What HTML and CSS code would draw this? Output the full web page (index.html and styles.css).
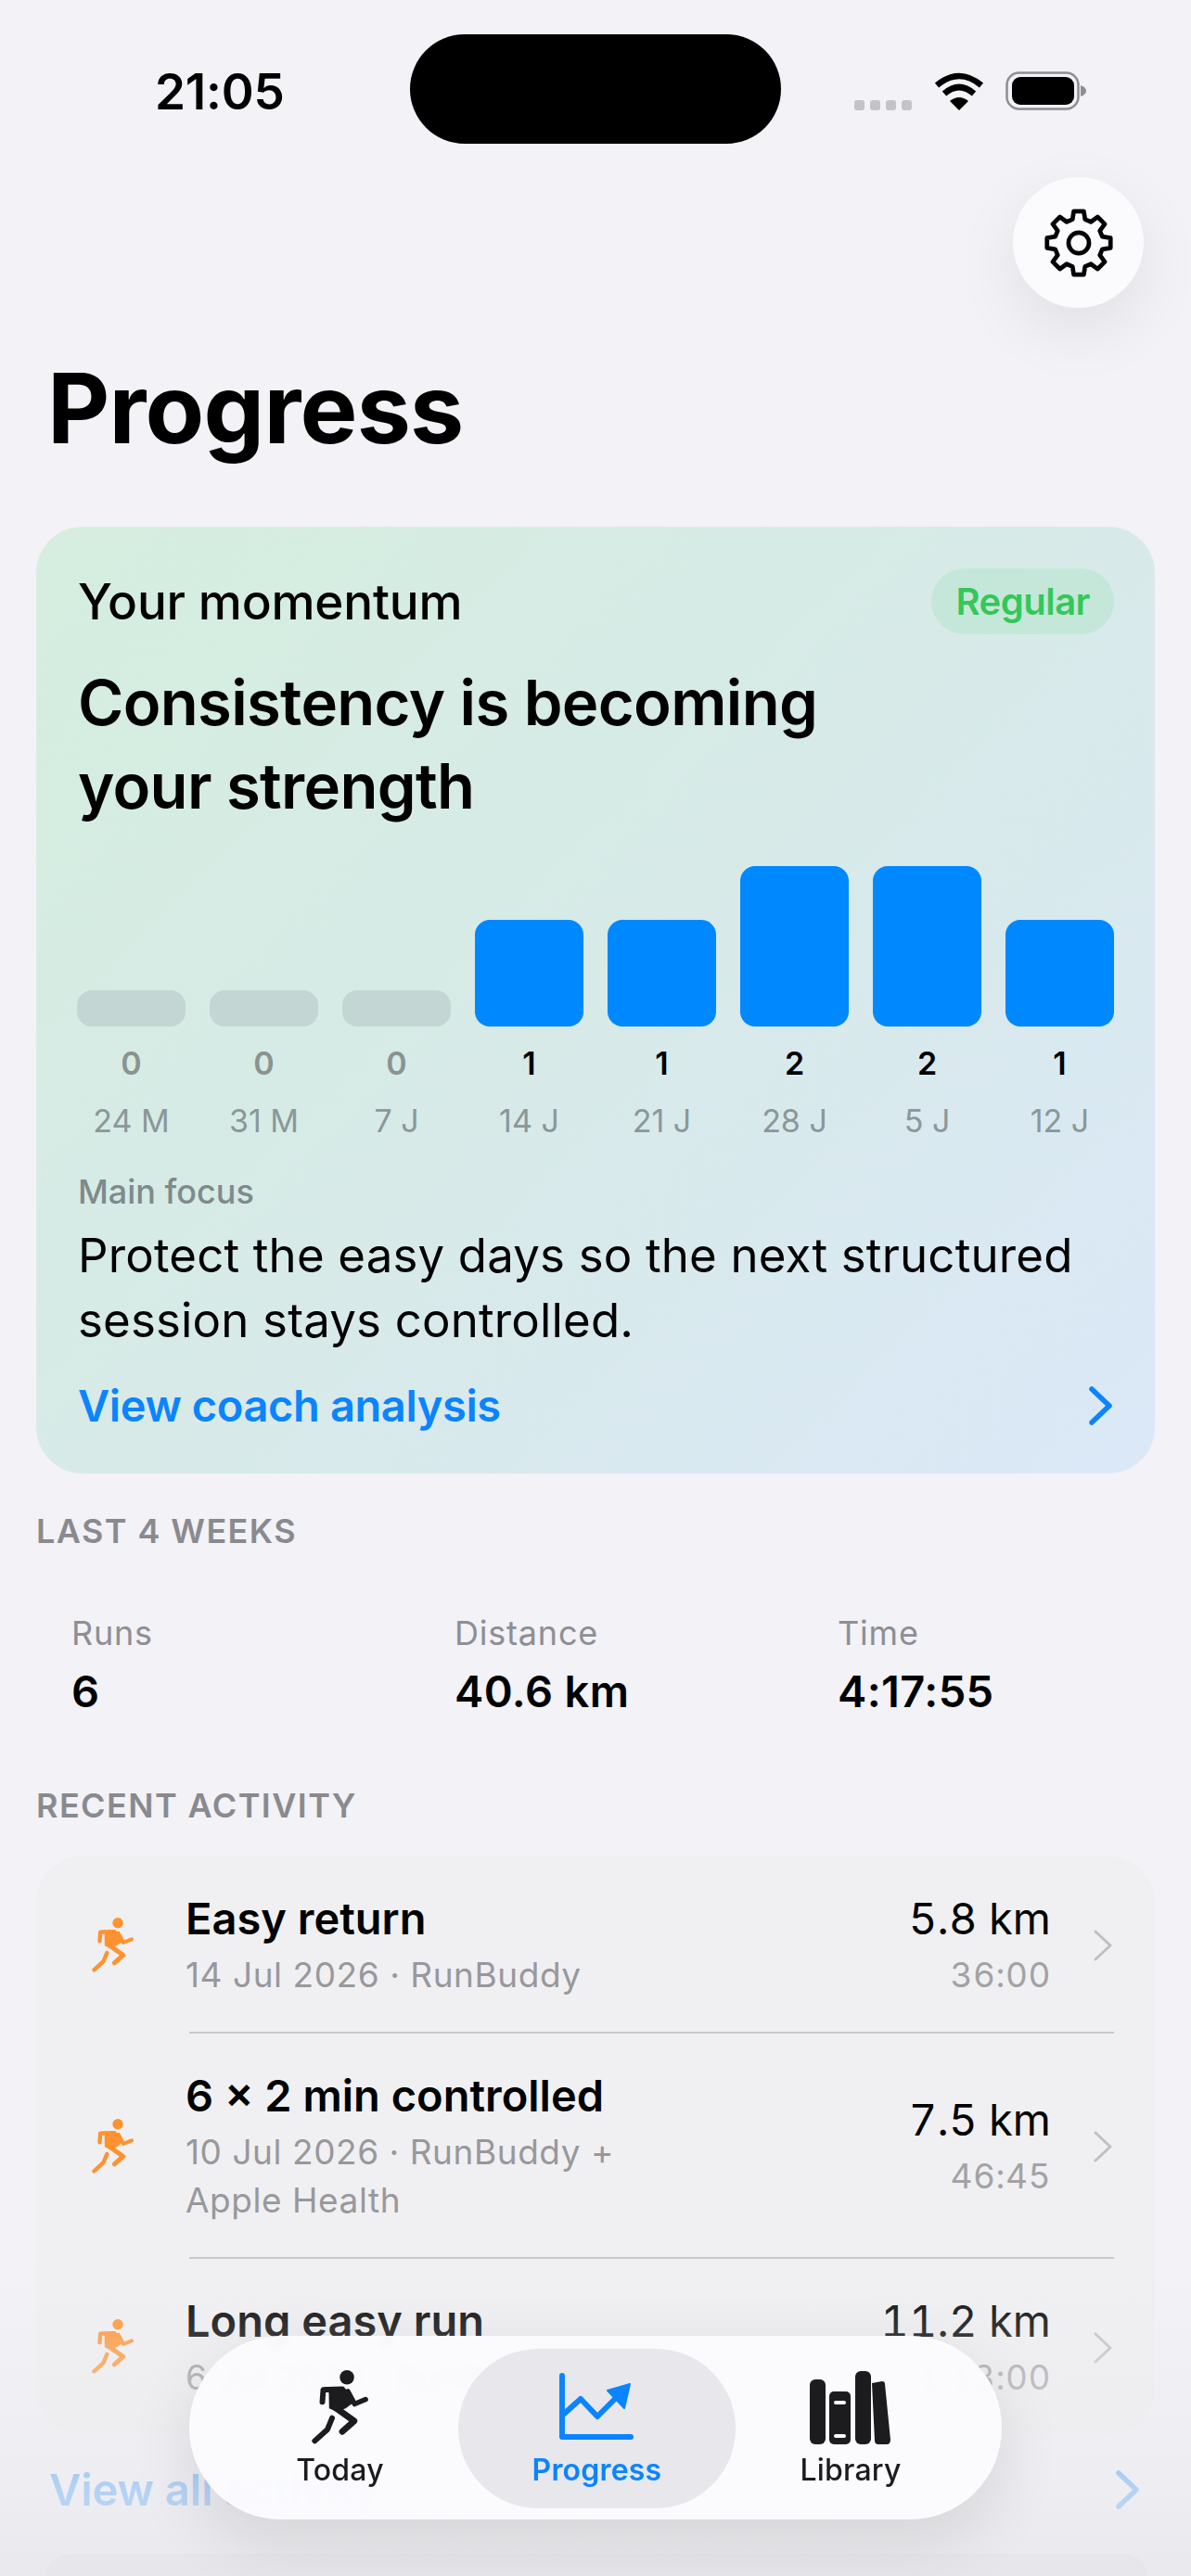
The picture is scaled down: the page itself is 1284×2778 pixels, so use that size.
FILE: index.html
```html
<!DOCTYPE html>
<html lang="en">
<head>
  <meta charset="UTF-8" />
  <title>Progress</title>
  <link rel="stylesheet" href="styles.css">
</head>
<body>
  <svg class="defs" width="0" height="0" aria-hidden="true">
    <symbol id="runner" viewBox="0 0 133 175">
      <circle cx="83" cy="17" r="17" fill="currentColor"/>
      <path d="M25 75 L27 48 Q27 46 30 46 L72 45" fill="none" stroke="currentColor" stroke-width="13" stroke-linecap="round" stroke-linejoin="round"/>
      <path d="M85 50 L101 80 L127 69" fill="none" stroke="currentColor" stroke-width="12" stroke-linecap="round" stroke-linejoin="round"/>
      <path d="M40 44 H80 L96 78 L80 90 L58 98 L41 90 Z" fill="currentColor"/>
      <path d="M58 90 L100 120 L72 145" fill="none" stroke="currentColor" stroke-width="15" stroke-linecap="round" stroke-linejoin="round"/>
      <path d="M48 113 L37 140 L7 167" fill="none" stroke="currentColor" stroke-width="13" stroke-linecap="round" stroke-linejoin="round"/>
    </symbol>
    <symbol id="chevron" viewBox="0 0 20 34">
      <path d="M2 2 L18 17 L2 32" fill="none" stroke="currentColor" stroke-width="3" stroke-linecap="round" stroke-linejoin="round"/>
    </symbol>
    <symbol id="chevron-bold" viewBox="0 0 28 42">
      <path d="M4 3 L23 21 L4 39" fill="none" stroke="currentColor" stroke-width="5.5" stroke-linecap="round" stroke-linejoin="round"/>
    </symbol>
  </svg>

  <div class="status">
    <span class="clock">21:05</span>
    <div class="island"></div>
    <div class="status-icons">
      <div class="signal"><i></i><i></i><i></i><i></i></div>
      <svg class="wifi" width="54" height="41" viewBox="0 0 54 41">
        <path d="M3 14 Q27 -6 51 14" fill="none" stroke="#000" stroke-width="6.5"/>
        <path d="M11 23 Q27 9 43 23" fill="none" stroke="#000" stroke-width="6.5"/>
        <path d="M27 41 L17 31 Q27 23 37 31 Z" fill="#000"/>
      </svg>
      <svg class="battery" width="88" height="42" viewBox="0 0 88 42">
        <rect x="1.5" y="1.5" width="77" height="39" rx="13" fill="none" stroke="#8e8e93" stroke-width="2.5"/>
        <rect x="7" y="6" width="67" height="30" rx="9" fill="#000"/>
        <path d="M81 15 Q87 17 87 21 Q87 25 81 27 Z" fill="#8e8e93"/>
      </svg>
    </div>
  </div>

  <button class="settings-btn" aria-label="Settings">
    <svg width="84" height="84" viewBox="-40 -40 80 80">
      <polygon points="32.59,-5.16 32.59,5.16 24.15,6.47 21.65,12.5 26.7,19.4 19.4,26.7 12.5,21.65 6.47,24.15 5.16,32.59 -5.16,32.59 -6.47,24.15 -12.5,21.65 -19.4,26.7 -26.7,19.4 -21.65,12.5 -24.15,6.47 -32.59,5.16 -32.59,-5.16 -24.15,-6.47 -21.65,-12.5 -26.7,-19.4 -19.4,-26.7 -12.5,-21.65 -6.47,-24.15 -5.16,-32.59 5.16,-32.59 6.47,-24.15 12.5,-21.65 19.4,-26.7 26.7,-19.4 21.65,-12.5 24.15,-6.47" fill="none" stroke="#000" stroke-width="4.5" stroke-linejoin="round"/>
      <circle r="10.5" fill="none" stroke="#000" stroke-width="4.5"/>
    </svg>
  </button>

  <h1 class="page-title">Progress</h1>

  <section class="momentum">
    <div class="momentum-top">
      <span class="momentum-label">Your momentum</span>
      <span class="badge">Regular</span>
    </div>
    <h2 class="momentum-title">Consistency is becoming<br>your strength</h2>

    <div class="chart">
      <div class="col empty"><div class="bar-slot"><div class="bar" style="height: 39px"></div></div><span class="count">0</span><span class="week">24 M</span></div>
      <div class="col empty"><div class="bar-slot"><div class="bar" style="height: 39px"></div></div><span class="count">0</span><span class="week">31 M</span></div>
      <div class="col empty"><div class="bar-slot"><div class="bar" style="height: 39px"></div></div><span class="count">0</span><span class="week">7 J</span></div>
      <div class="col"><div class="bar-slot"><div class="bar" style="height: 115px"></div></div><span class="count">1</span><span class="week">14 J</span></div>
      <div class="col"><div class="bar-slot"><div class="bar" style="height: 115px"></div></div><span class="count">1</span><span class="week">21 J</span></div>
      <div class="col"><div class="bar-slot"><div class="bar" style="height: 173px"></div></div><span class="count">2</span><span class="week">28 J</span></div>
      <div class="col"><div class="bar-slot"><div class="bar" style="height: 173px"></div></div><span class="count">2</span><span class="week">5 J</span></div>
      <div class="col"><div class="bar-slot"><div class="bar" style="height: 115px"></div></div><span class="count">1</span><span class="week">12 J</span></div>
    </div>

    <div class="focus-label">Main focus</div>
    <p class="focus-text">Protect the easy days so the next structured<br>session stays controlled.</p>
    <a class="coach-link" href="#">
      <span>View coach analysis</span>
      <svg width="28" height="42"><use href="#chevron-bold"/></svg>
    </a>
  </section>

  <h3 class="section-title first">LAST 4 WEEKS</h3>
  <div class="stats">
    <div><div class="stat-label">Runs</div><div class="stat-value">6</div></div>
    <div><div class="stat-label">Distance</div><div class="stat-value">40.6 km</div></div>
    <div><div class="stat-label">Time</div><div class="stat-value">4:17:55</div></div>
  </div>

  <h3 class="section-title">RECENT ACTIVITY</h3>
  <div class="activity-list">
    <div class="activity">
      <svg class="run-icon" width="45" height="59"><use href="#runner"/></svg>
      <div class="activity-body">
        <div class="activity-main">
          <div class="activity-title">Easy return</div>
          <div class="activity-sub">14 Jul 2026 · RunBuddy</div>
        </div>
        <div class="activity-nums">
          <div class="activity-dist">5.8 km</div>
          <div class="activity-time">36:00</div>
        </div>
        <svg class="row-chevron" width="20" height="34"><use href="#chevron"/></svg>
      </div>
    </div>
    <div class="activity">
      <svg class="run-icon" width="45" height="59"><use href="#runner"/></svg>
      <div class="activity-body">
        <div class="activity-main">
          <div class="activity-title">6 × 2 min controlled</div>
          <div class="activity-sub">10 Jul 2026 · RunBuddy +<br>Apple Health</div>
        </div>
        <div class="activity-nums">
          <div class="activity-dist">7.5 km</div>
          <div class="activity-time">46:45</div>
        </div>
        <svg class="row-chevron" width="20" height="34"><use href="#chevron"/></svg>
      </div>
    </div>
    <div class="activity">
      <svg class="run-icon" width="45" height="59"><use href="#runner"/></svg>
      <div class="activity-body">
        <div class="activity-main">
          <div class="activity-title">Long easy run</div>
          <div class="activity-sub">6 Jul 2026 · RunBuddy</div>
        </div>
        <div class="activity-nums">
          <div class="activity-dist">11.2 km</div>
          <div class="activity-time">1:13:00</div>
        </div>
        <svg class="row-chevron" width="20" height="34"><use href="#chevron"/></svg>
      </div>
    </div>
  </div>

  <a class="view-all" href="#">
    <span>View all activity</span>
    <svg width="28" height="42"><use href="#chevron-bold"/></svg>
  </a>
  <div class="next-card"></div>

  <div class="fade"></div>

  <nav class="tabbar">
    <a class="tab" href="#">
      <span class="tab-icon"><svg width="61" height="80"><use href="#runner"/></svg></span>
      <span class="tab-label">Today</span>
    </a>
    <a class="tab active" href="#">
      <span class="tab-icon">
        <svg width="82" height="74" viewBox="0 0 82 74">
          <path d="M3 3 V69 H77" fill="none" stroke="currentColor" stroke-width="6" stroke-linecap="round" stroke-linejoin="round"/>
          <path d="M3 46 L23 28 L41 47 L62 26" fill="none" stroke="currentColor" stroke-width="6" stroke-linejoin="round"/>
          <path d="M52 19 L76 12 L70 38 Z" fill="currentColor" stroke="currentColor" stroke-width="2" stroke-linejoin="round"/>
        </svg>
      </span>
      <span class="tab-label">Progress</span>
    </a>
    <a class="tab library" href="#">
      <span class="tab-icon">
        <svg width="90" height="80" viewBox="0 0 90 80">
          <rect x="1" y="10" width="17" height="70" rx="6" fill="currentColor"/>
          <rect x="22" y="23" width="23" height="57" rx="5" fill="currentColor"/>
          <rect x="27" y="33" width="13" height="4" rx="2" fill="#fbfbfe"/>
          <rect x="27" y="69" width="13" height="4" rx="2" fill="#fbfbfe"/>
          <rect x="50" y="1" width="17" height="79" rx="6" fill="currentColor"/>
          <path d="M68 14 L79 12 Q82 12 82 15 L88 75 Q88 80 84 80 H75 Q71 80 71 76 Z" fill="currentColor"/>
        </svg>
      </span>
      <span class="tab-label">Library</span>
    </a>
  </nav>
</body>
</html>
```

FILE: styles.css
```css
* { box-sizing: border-box; }
html, body {
  margin: 0;
  padding: 0;
}
body {
  position: relative;
  width: 1284px;
  height: 2778px;
  overflow: hidden;
  font-family: Inter, "Noto Sans", sans-serif;
  background: #f2f2f7;
  color: #000;
}
a { text-decoration: none; color: inherit; }
.defs { position: absolute; }

/* status bar */
.status {
  display: flex;
  align-items: flex-start;
  height: 155px;
  padding: 37px 0 0 167px;
}
.clock {
  width: 275px;
  margin-top: 32px;
  font-size: 53px;
  line-height: 60px;
  font-weight: 600;
  letter-spacing: -0.2px;
}
.island {
  width: 400px;
  height: 118px;
  background: #000;
  border-radius: 59px;
}
.status-icons {
  display: flex;
  align-items: flex-end;
  margin: 40px 0 0 79px;
}
.signal {
  display: flex;
  gap: 6px;
}
.signal i {
  width: 11px;
  height: 11px;
  border-radius: 3px;
  background: #c4c4c8;
}
.wifi { margin-left: 24px; }
.battery { margin-left: 23px; }

.settings-btn {
  display: flex;
  align-items: center;
  justify-content: center;
  width: 141px;
  height: 141px;
  margin: 36px 0 0 1092px;
  padding: 0;
  border: none;
  border-radius: 50%;
  background: #fbfbfe;
  box-shadow: 0 24px 70px rgba(0, 0, 0, 0.08);
}

.page-title {
  margin: 45px 0 65px 51px;
  font-size: 104px;
  line-height: 126px;
  font-weight: 700;
  letter-spacing: -0.8px;
}

/* momentum card */
.momentum {
  margin: 0 39px;
  padding: 45px 44px 43px 45px;
  border-radius: 50px;
  background: linear-gradient(135deg, #d5eedf 0%, #d7eae8 50%, #dbe8f8 100%);
}
.momentum-top {
  display: flex;
  justify-content: space-between;
  align-items: center;
  height: 71px;
}
.momentum-label {
  font-size: 53px;
  font-weight: 550;
  letter-spacing: -0.2px;
}
.badge {
  padding: 0 26px;
  font-size: 40px;
  line-height: 71px;
  font-weight: 600;
  color: #34c759;
  background: #c4e7da;
  border-radius: 36px;
  letter-spacing: -0.5px;
}
.momentum-title {
  margin: 29px 0 41px;
  font-size: 67px;
  line-height: 90px;
  font-weight: 600;
  letter-spacing: -0.7px;
}
.chart {
  display: grid;
  grid-template-columns: repeat(8, 117px);
  gap: 26px;
  margin-left: -1px;
}
.col {
  display: flex;
  flex-direction: column;
  align-items: center;
}
.bar-slot {
  display: flex;
  align-items: flex-end;
  width: 100%;
  height: 173px;
}
.bar {
  width: 100%;
  background: #0088ff;
  border-radius: 16px;
}
.empty .bar { background: #c3d6d4; }
.count {
  margin-top: 18px;
  font-size: 34px;
  line-height: 44px;
  font-weight: 600;
}
.empty .count { color: #8a9392; }
.week {
  margin-top: 18px;
  font-size: 34px;
  line-height: 44px;
  color: #8b9799;
  white-space: nowrap;
}
.focus-label {
  margin-top: 32px;
  font-size: 36px;
  line-height: 44px;
  font-weight: 500;
  color: #7f8a8a;
}
.focus-text {
  margin: 12px 0 0;
  font-size: 51px;
  line-height: 70px;
  letter-spacing: 0.15px;
}
.coach-link {
  display: flex;
  justify-content: space-between;
  align-items: center;
  margin-top: 27px;
  font-size: 47px;
  line-height: 60px;
  font-weight: 600;
  color: #0a84ff;
  letter-spacing: -0.4px;
}

.section-title {
  margin: 71px 0 0 39px;
  font-size: 36px;
  line-height: 44px;
  font-weight: 600;
  letter-spacing: 1.4px;
  color: #8a8a8e;
}
.section-title.first { margin-top: 40px; }

.stats {
  display: grid;
  grid-template-columns: 413px 413px 1fr;
  margin: 66px 0 0 77px;
}
.stat-label {
  font-size: 36px;
  line-height: 44px;
  letter-spacing: 0.8px;
  color: #8e8e93;
}
.stat-value {
  margin-top: 11px;
  font-size: 47px;
  line-height: 60px;
  font-weight: 600;
  letter-spacing: 0.4px;
}

/* recent activity */
.activity-list {
  margin: 33px 39px 0;
  padding: 0 44px 0 45px;
  background: #f0f0f2;
  border-radius: 50px;
}
.activity {
  display: flex;
  align-items: center;
}
.run-icon {
  flex: none;
  margin: 0 60px 0 15px;
  color: #ff9230;
}
.activity-body {
  flex: 1;
  display: flex;
  align-items: center;
  padding: 38px 0 35px;
  border-bottom: 2px solid #c9c9cc;
}
.activity:last-child .activity-body { border-bottom: none; }
.activity-main {
  flex: 1;
  margin-left: -4px;
}
.activity-title {
  font-size: 47px;
  line-height: 58px;
  font-weight: 600;
}
.activity-sub {
  margin-top: 6px;
  font-size: 37px;
  line-height: 52px;
  letter-spacing: 0.55px;
  color: #98989c;
}
.activity-nums {
  margin-right: 46px;
  text-align: right;
  font-variant-numeric: tabular-nums;
}
.activity-dist {
  font-size: 47px;
  line-height: 58px;
}
.activity-time {
  margin-top: 6px;
  font-size: 37px;
  line-height: 52px;
  letter-spacing: 0.5px;
  color: #a2a2a6;
}
.row-chevron {
  margin-right: 2px;
  color: #c0c0c4;
}

.view-all {
  display: flex;
  justify-content: space-between;
  align-items: center;
  margin: 30px 54px 0 53px;
  font-size: 47px;
  line-height: 60px;
  font-weight: 600;
  color: #0a84ff;
}
.next-card {
  height: 25px;
  margin: 39px 47px 0 49px;
  background: #dcdce1;
  border-radius: 50px 50px 0 0;
}

/* fade behind the floating tab bar */
.fade {
  position: absolute;
  left: 0;
  right: 0;
  top: 2440px;
  bottom: 0;
  background: linear-gradient(rgba(240, 240, 244, 0), rgba(236, 236, 240, 0.75) 72%, rgba(232, 232, 236, 0.88));
}

.tabbar {
  position: absolute;
  left: 204px;
  top: 2519px;
  display: grid;
  grid-template-columns: repeat(3, 277px);
  width: 876px;
  height: 198px;
  padding: 14px 24px 12px;
  background: rgba(251, 251, 254, 0.97);
  border-radius: 99px;
  box-shadow: 0 24px 70px rgba(0, 0, 0, 0.1);
  backdrop-filter: blur(3px);
}
.tab {
  display: flex;
  flex-direction: column;
  align-items: center;
  padding-top: 23px;
  color: #1c1c1e;
  border-radius: 86px;
}
.tab.active {
  margin: 0 -11px;
  background: #e7e7ec;
  color: #0a84ff;
}
.tab.library { padding-right: 7px; }
.tab-icon {
  display: flex;
  align-items: center;
  justify-content: center;
  height: 80px;
}
.tab-label {
  margin-top: 8px;
  font-size: 32px;
  line-height: 40px;
  font-weight: 500;
  letter-spacing: 0.2px;
}
.tab.active .tab-label { font-weight: 600; }
```
